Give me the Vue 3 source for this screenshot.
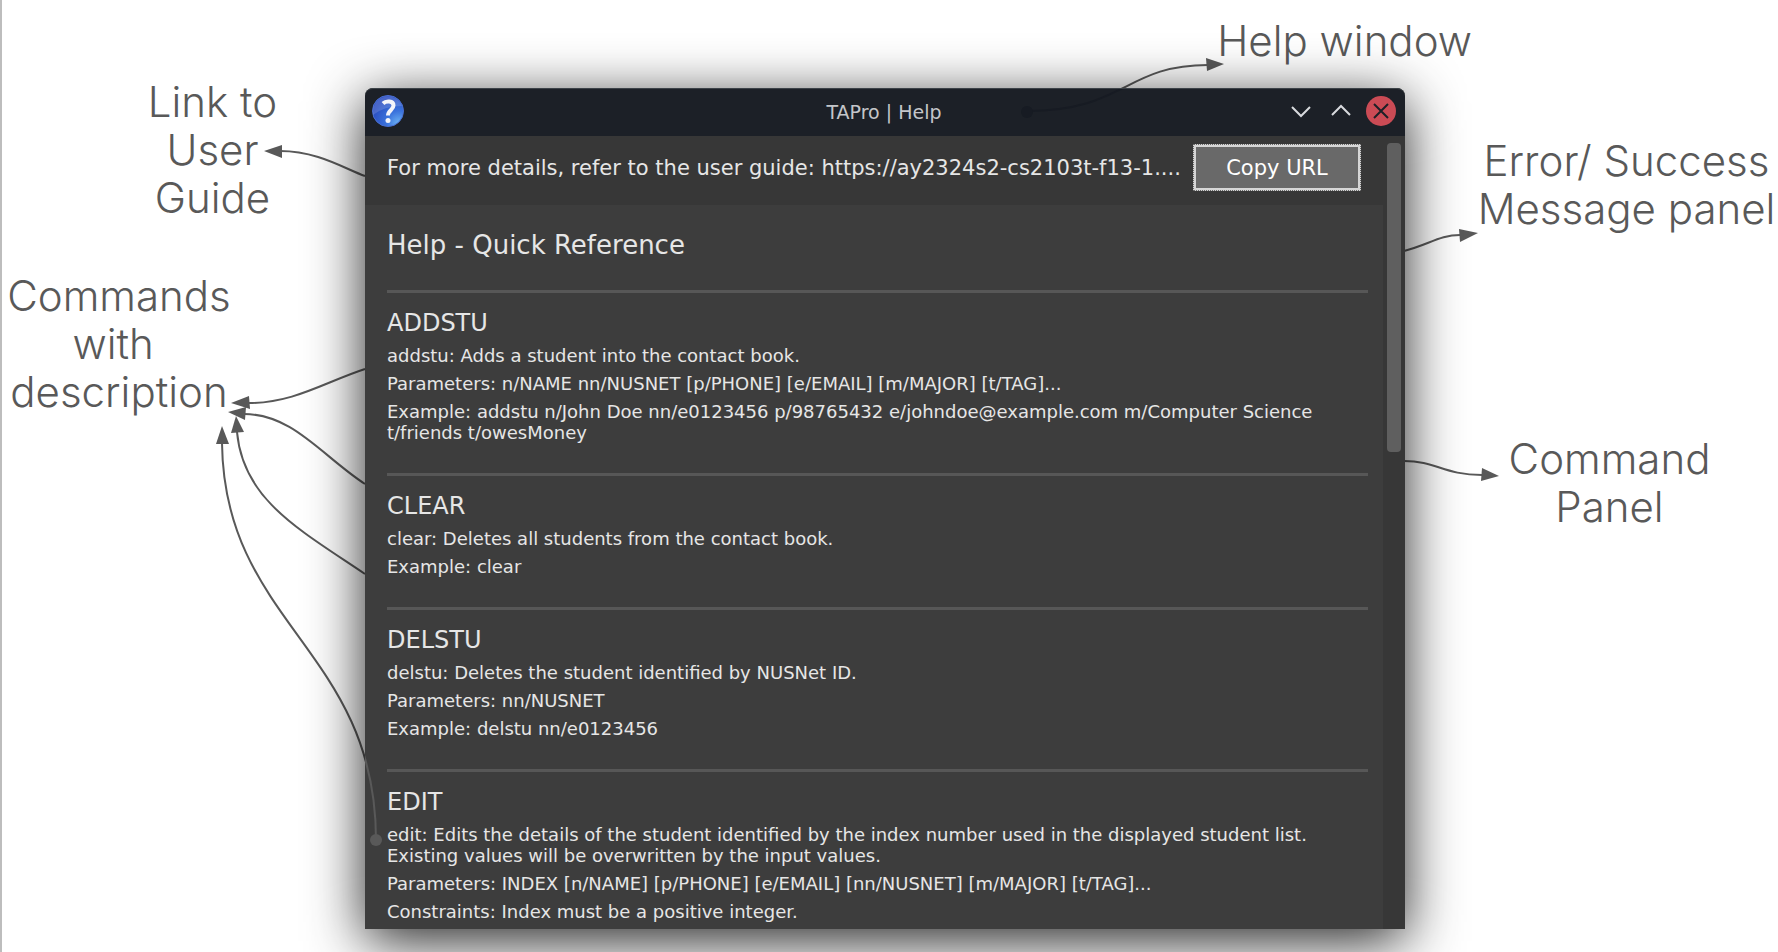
<script setup>
const commands = [
  {
    name: 'ADDSTU',
    lines: [
      'addstu: Adds a student into the contact book.',
      'Parameters: n/NAME nn/NUSNET [p/PHONE] [e/EMAIL] [m/MAJOR] [t/TAG]...',
      'Example: addstu n/John Doe nn/e0123456 p/98765432 e/johndoe@example.com m/Computer Science t/friends t/owesMoney',
    ],
  },
  {
    name: 'CLEAR',
    lines: ['clear: Deletes all students from the contact book.', 'Example: clear'],
  },
  {
    name: 'DELSTU',
    lines: [
      'delstu: Deletes the student identified by NUSNet ID.',
      'Parameters: nn/NUSNET',
      'Example: delstu nn/e0123456',
    ],
  },
  {
    name: 'EDIT',
    lines: [
      'edit: Edits the details of the student identified by the index number used in the displayed student list. Existing values will be overwritten by the input values.',
      'Parameters: INDEX [n/NAME] [p/PHONE] [e/EMAIL] [nn/NUSNET] [m/MAJOR] [t/TAG]...',
      'Constraints: Index must be a positive integer.',
    ],
  },
]
</script>

<template>
  <div class="canvas">
    <svg class="arrows under" viewBox="0 0 1778 952" preserveAspectRatio="none" aria-hidden="true">
      <g class="line">
        <path d="M365 176C345 169 318 151 280 151" />
        <path d="M365 369C325 382 294 403 249 403" />
        <path d="M365 484C322 456 293 414 244 414" />
        <path d="M365 574C300 530 243 500 237 432" />
        <path d="M376 840C376 650 224 624 222 443" />
        <path d="M1027 111C1125 111 1125 65 1208 65" />
        <path d="M1404 251C1428 245 1440 235 1460 235" />
        <path d="M1404 461C1436 461 1444 475 1482 475" />
      </g>
      <g class="head">
        <path d="M264 151L282 145V158Z" />
        <path d="M231 403L249 396L250 409Z" />
        <path d="M228 412L246 407L245 420Z" />
        <path d="M236 416L231 433L244 432Z" />
        <path d="M222 426L216 444H229Z" />
        <path d="M1224 64L1206 58L1207 71Z" />
        <path d="M1478 233L1459 229L1460 242Z" />
        <path d="M1499 476L1482 468L1481 481Z" />
      </g>
    </svg>

    <aside class="side">
      <p class="note link-note">Link to<br />User<br />Guide</p>
      <p class="note commands-note">Commands<br />with&nbsp;<br />description</p>
    </aside>

    <main class="window">
      <header class="titlebar">
        <svg class="app-icon" viewBox="0 0 32 32" aria-hidden="true">
          <defs>
            <radialGradient id="orb" cx="0.85" cy="0.9" r="0.9">
              <stop offset="0" stop-color="#6db4f5" />
              <stop offset="0.45" stop-color="#3a72dc" />
              <stop offset="1" stop-color="#2a4cc0" />
            </radialGradient>
          </defs>
          <circle cx="16" cy="16" r="15.5" fill="url(#orb)" stroke="#4a6fd0" />
          <path d="M1 17A15 15 0 0 1 30 11Q12 11 1 20Z" fill="#fff" opacity="0.15" />
          <path d="M11 8.500C14 5.500 21.500 5.500 21.500 10.500C21.500 15 16 15 16 20.500" fill="none" stroke="#f4f4fa" stroke-width="4" />
          <circle cx="16" cy="25.500" r="2.500" fill="#f4f4fa" />
        </svg>
        <h1>TAPro | Help</h1>
        <div class="controls">
          <button type="button" aria-label="Minimize">
            <svg viewBox="0 0 30 30"><path d="M6 11L15 20L24 11" /></svg>
          </button>
          <button type="button" aria-label="Maximize">
            <svg viewBox="0 0 30 30"><path d="M6 19L15 10L24 19" /></svg>
          </button>
          <button type="button" class="close" aria-label="Close">
            <svg viewBox="0 0 30 30"><path d="M8 8L22 22M22 8L8 22" /></svg>
          </button>
        </div>
      </header>

      <div class="body">
        <div class="content">
          <div class="url-bar">
            <p>For more details, refer to the user guide: https://ay2324s2-cs2103t-f13-1....</p>
            <button type="button" class="copy">Copy URL</button>
          </div>
          <div class="reference">
            <h2>Help - Quick Reference</h2>
            <section v-for="command in commands" :key="command.name">
              <h3>{{ command.name }}</h3>
              <p v-for="line in command.lines" :key="line">{{ line }}</p>
            </section>
          </div>
        </div>
        <div class="scrollbar"><div class="thumb"></div></div>
      </div>
    </main>

    <aside class="side right">
      <p class="note error-note">Error/ Success<br />Message panel</p>
      <p class="note panel-note">Command<br />Panel</p>
    </aside>
    <p class="note window-note">Help window</p>

    <svg class="arrows over" viewBox="0 0 1778 952" preserveAspectRatio="none" aria-hidden="true">
      <clipPath id="inside"><rect x="365" y="89" width="1040" height="840" /></clipPath>
      <g clip-path="url(#inside)">
        <path class="title-line" d="M1027 111C1125 111 1125 65 1208 65" />
        <circle cx="1027" cy="112" r="6" fill="#171b23" />
        <path class="edit-line" d="M376 840C376 650 224 624 222 443" />
        <circle cx="376" cy="840" r="6" fill="#595959" />
      </g>
    </svg>
  </div>
</template>

<style>
body {
  margin: 0;
  background: #fff;
}
</style>

<style scoped>
.canvas {
  position: relative;
  display: grid;
  grid-template-columns: minmax(0, 363fr) minmax(0, 1040fr) minmax(0, 373fr);
  align-items: start;
  box-sizing: border-box;
  min-height: 100vh;
  padding: 88px 0 23px;
  border-left: 2px solid #bdbdbd;
  overflow: hidden;
  font-family: "DejaVu Sans", sans-serif;
}
h1, h2, h3, p {
  margin: 0;
  font-weight: 400;
}
.arrows {
  position: absolute;
  top: 0;
  left: -2px;
  width: calc(100% + 2px);
  height: 952px;
  pointer-events: none;
}
.under { z-index: 0; }
.over { z-index: 2; }
.line {
  fill: none;
  stroke: #595959;
  stroke-width: 2;
}
.head { fill: #595959; }
.title-line {
  fill: none;
  stroke: #171b23;
  stroke-width: 2;
}
.edit-line {
  fill: none;
  stroke: #595959;
  stroke-width: 2;
}
.side {
  display: flex;
  flex-direction: column;
  align-items: center;
}
.note {
  color: #595959;
  font-family: Inter, sans-serif;
  font-size: 42px;
  font-weight: 300;
  line-height: 48px;
  text-align: center;
  white-space: nowrap;
}
.link-note { margin-left: 58px; margin-top: -10px; }
.commands-note { margin-top: 50px; margin-right: 129px; }
.right { padding-top: 49px; }
.error-note { margin-left: 70px; }
.panel-note { margin-top: 202px; margin-left: 36px; }
.window-note {
  position: absolute;
  top: 17px;
  left: 75.6%;
  transform: translateX(-50%);
}
.window {
  position: relative;
  z-index: 1;
  border-radius: 8px 8px 0 0;
  background: #3d3d3d;
  box-shadow: 0 12px 56px rgba(0, 0, 0, 0.86);
}
.titlebar {
  display: grid;
  grid-template-columns: 1fr auto 1fr;
  align-items: center;
  box-sizing: border-box;
  height: 48px;
  padding: 0 9px 3px 7px;
  border-top: 1px solid #3c4248;
  border-radius: 8px 8px 0 0;
  background: #1c2027;
}
.app-icon { width: 32px; height: 32px; }
.titlebar h1 {
  padding-top: 2px;
  color: #c4c6ca;
  font-size: 19px;
}
.controls {
  display: flex;
  justify-content: flex-end;
  gap: 10px;
}
.controls button {
  width: 30px;
  height: 30px;
  padding: 0;
  border: 0;
  border-radius: 50%;
  background: none;
}
.controls svg {
  display: block;
  fill: none;
  stroke: #d8dade;
  stroke-width: 2;
}
.controls .close { background: #cb4b55; }
.controls .close svg { stroke: #1c2027; }
.body { display: flex; }
.content {
  flex: 1;
  min-width: 0;
}
.url-bar {
  display: flex;
  align-items: center;
  justify-content: space-between;
  box-sizing: border-box;
  height: 69px;
  padding: 0 22px 7px;
  background: #373737;
  color: #e6e6e6;
  font-size: 21px;
  white-space: nowrap;
}
.url-bar p { padding-top: 2px; }
.copy {
  width: 168px;
  height: 47px;
  padding: 2px 0 0;
  border: 3px solid #d6d6d6;
  outline: 1px dotted #696969;
  outline-offset: -1px;
  background: #696969;
  color: #fff;
  font: 21px "DejaVu Sans", sans-serif;
}
.reference {
  padding: 25px 15px 7px 22px;
  color: #e6e6e6;
}
h2 {
  padding-bottom: 30px;
  font-size: 26px;
  line-height: 30px;
}
section {
  border-top: 3px solid #575757;
  padding: 16px 0 30px;
  font-size: 18px;
  line-height: 21px;
}
section:last-child { padding-bottom: 0; }
h3 {
  margin-bottom: 8px;
  font-size: 24px;
  line-height: 28px;
}
section p + p { margin-top: 7px; }
.scrollbar {
  display: flex;
  justify-content: center;
  width: 22px;
  padding-top: 7px;
  box-sizing: border-box;
  background: #373737;
}
.thumb {
  width: 14px;
  height: 309px;
  border-radius: 4px;
  background: #5f5f5f;
}
</style>
